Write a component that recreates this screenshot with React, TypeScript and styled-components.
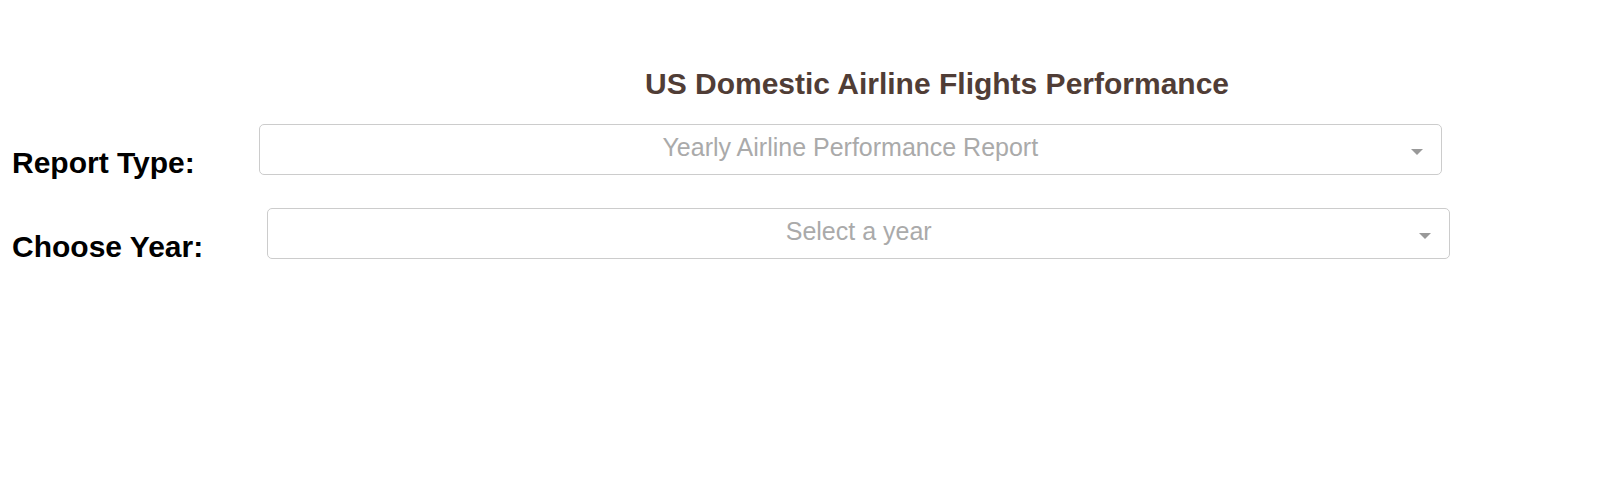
import React from "react";
import styled, { createGlobalStyle } from "styled-components";

const Global = createGlobalStyle`
  html, body {
    margin: 0;
    padding: 0;
    background: #ffffff;
    font-family: "Liberation Sans", Arial, Helvetica, sans-serif;
  }
`;

const Page = styled.div`
  padding: 0 12px;
`;

const Title = styled.h1`
  margin: 0;
  padding: 67px 0 0 633px;
  font-size: 30px;
  line-height: 34px;
  font-weight: 700;
  color: #503d36;
  white-space: nowrap;
`;

const Rows = styled.div`
  margin-top: 23px;
  display: flex;
  flex-direction: column;
`;

const Row = styled.div`
  display: flex;
  align-items: flex-start;
  height: 84px;
`;

const Label = styled.h2`
  margin: 22px 64px 0 0;
  font-size: 30px;
  line-height: 34px;
  font-weight: 700;
  color: #000;
  white-space: nowrap;
`;

const Control = styled.div`
  position: relative;
  box-sizing: border-box;
  width: 1183px;
  height: 51px;
  border: 1px solid #ccc;
  border-radius: 5px;
  background: #fff;
  padding: 0 31px;
  display: flex;
  align-items: center;
  justify-content: center;
`;

const Placeholder = styled.span`
  font-size: 25px;
  line-height: 30px;
  margin-top: -5px;
  color: #aaa;
  white-space: nowrap;
`;

const Arrow = styled.span`
  position: absolute;
  right: 18px;
  top: 24px;
  width: 0;
  height: 0;
  border-style: solid;
  border-width: 6px 6px 0;
  border-color: #999 transparent transparent;
`;

const fields = [
  { label: "Report Type:", placeholder: "Yearly Airline Performance Report" },
  { label: "Choose Year:", placeholder: "Select a year" },
];

export default function App() {
  return (
    <>
      <Global />
      <Page>
        <Title>US Domestic Airline Flights Performance</Title>
        <Rows>
          {fields.map((f) => (
            <Row key={f.label}>
              <Label>{f.label}</Label>
              <Control>
                <Placeholder>{f.placeholder}</Placeholder>
                <Arrow />
              </Control>
            </Row>
          ))}
        </Rows>
      </Page>
    </>
  );
}
